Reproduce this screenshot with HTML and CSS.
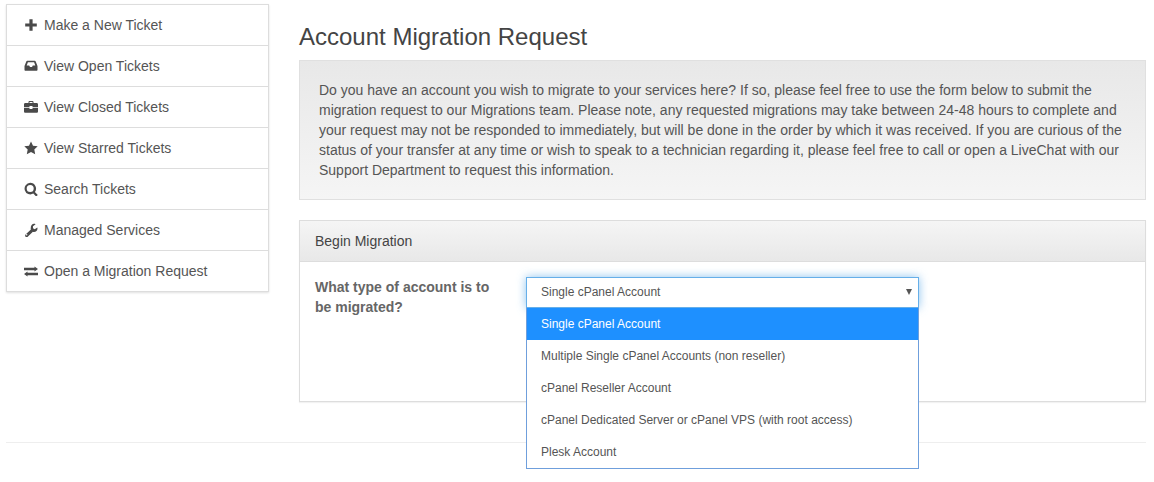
FILE: index.html
```html
<!DOCTYPE html>
<html lang="en">
<head>
<meta charset="utf-8">
<title>Account Migration Request</title>
<link rel="stylesheet" href="styles.css">
</head>
<body>
<div class="page">
  <div class="columns">
    <nav class="sidebar">
      <a class="nav-item"><svg class="icon" viewBox="0 0 14 14"><path d="M5.400 1.200h3.200v4.200h4.200v3.200H8.600v4.200H5.400V8.600H1.200V5.400h4.200z"/></svg>Make a New Ticket</a>
      <a class="nav-item"><svg class="icon" viewBox="0 0 14 14"><path fill-rule="evenodd" d="M3.200 1.800h7.600c.4 0 .7.2.9.6l1.700 4.300c.1.2.1.4.1.6v3.400c0 .6-.4 1-1 1H1.500c-.6 0-1-.4-1-1V7.300c0-.2 0-.4.1-.6l1.700-4.300c.2-.4.5-.6.9-.6zM3.900 3.300 2.700 6.600h2.500l.8 1.500h2l.8-1.500h2.500l-1.200-3.300z"/></svg>View Open Tickets</a>
      <a class="nav-item"><svg class="icon" viewBox="0 0 14 14"><path fill-rule="evenodd" d="M4.500 3V2c0-.5.4-.9.9-.9h3.200c.5 0 .9.4.9.9v1h3.200c.7 0 1.300.6 1.300 1.300v2.700H8.500V6h-3v1H0V4.300C0 3.600.6 3 1.300 3zm1-.9V3h3v-.9zM0 7.800h5.500v1.200h3V7.800H14v3.700c0 .7-.6 1.300-1.300 1.300H1.300C.6 12.800 0 12.200 0 11.500z"/></svg>View Closed Tickets</a>
      <a class="nav-item"><svg class="icon" viewBox="0 0 14 14"><path d="M7 .4l2 4.300 4.700.6-3.400 3.300.9 4.700L7 11l-4.200 2.300.9-4.700L.3 5.300 5 4.700z"/></svg>View Starred Tickets</a>
      <a class="nav-item"><svg class="icon" viewBox="0 0 14 14"><path fill-rule="evenodd" d="M6.200.8a5.800 5.800 0 0 1 4.700 9.200l2.900 2.900-1.600 1.600-2.900-2.900A5.800 5.800 0 1 1 6.200.8zm0 2.300a3.500 3.500 0 1 0 0 7 3.500 3.500 0 0 0 0-7z"/></svg>Search Tickets</a>
      <a class="nav-item"><svg class="icon" viewBox="0 0 14 14"><path fill-rule="evenodd" d="M10 .8c.6 0 1.100.1 1.600.4L9 3.200v2l1.700 1 2.600-1.800c.1.3.2.7.2 1 0 2-1.600 3.500-3.500 3.500-.4 0-.8-.1-1.100-.2l-5.200 5c-.6.600-1.500.6-2.100 0-.6-.6-.6-1.500 0-2.100l5.300-5.100c-.1-.3-.2-.7-.2-1.100C6.700 2.400 8.200.8 10 .8zM2.700 11a.7.7 0 1 0 0 1.400.7.7 0 0 0 0-1.400z"/></svg>Managed Services</a>
      <a class="nav-item"><svg class="icon" viewBox="0 0 14 14"><path d="M0 3.800h10.500V2.400L14 5l-3.500 2.600V6.200H0zM14 8.800v2.400H3.500v1.400L0 10l3.500-2.600v1.400z"/></svg>Open a Migration Request</a>
    </nav>
    <main class="content">
      <h1 class="title">Account Migration Request</h1>
      <div class="well">Do you have an account you wish to migrate to your services here? If so, please feel free to use the form below to submit the migration request to our Migrations team. Please note, any requested migrations may take between 24-48 hours to complete and your request may not be responded to immediately, but will be done in the order by which it was received. If you are curious of the status of your transfer at any time or wish to speak to a technician regarding it, please feel free to call or open a LiveChat with our Support Department to request this information.</div>
      <section class="panel">
        <div class="panel-head">Begin Migration</div>
        <div class="panel-body">
          <div class="field-label">What type of account is to be migrated?</div>
          <div class="field">
            <div class="select">Single cPanel Account<span class="arrow"></span></div>
            <ul class="options">
              <li class="option selected">Single cPanel Account</li>
              <li class="option">Multiple Single cPanel Accounts (non reseller)</li>
              <li class="option">cPanel Reseller Account</li>
              <li class="option">cPanel Dedicated Server or cPanel VPS (with root access)</li>
              <li class="option">Plesk Account</li>
            </ul>
          </div>
        </div>
      </section>
    </main>
  </div>
  <hr class="rule">
</div>
</body>
</html>
```

FILE: styles.css
```css
* { box-sizing: border-box; }
html, body { margin: 0; padding: 0; background: #fff; }
body {
  font-family: "Liberation Sans", Arial, sans-serif;
  font-size: 14px;
  line-height: 20px;
  color: #555;
}
.page { min-height: 482px; padding: 4px 8px 0 6px; }
.columns { display: flex; gap: 30px; align-items: flex-start; }
.sidebar {
  width: 263px;
  flex: none;
  border: 1px solid #ddd;
  border-bottom-width: 0;
  background: #fff;
  box-shadow: 0 1px 2px rgba(0, 0, 0, .12);
}
.nav-item {
  display: flex;
  align-items: center;
  gap: 6px;
  height: 41px;
  padding-left: 17px;
  border-bottom: 1px solid #ddd;
  color: #555;
}
.icon { width: 14px; height: 14px; fill: #4a4a4a; flex: none; }
.content { flex: 1; min-width: 0; }
.title {
  margin: 20px 0 10px;
  font-size: 24px;
  font-weight: 400;
  line-height: 26px;
  color: #444;
}
.well {
  height: 140px;
  padding: 19px;
  border: 1px solid #e0e0e0;
  background: linear-gradient(to bottom, #e8e8e8, #f5f5f5);
}
.panel {
  margin-top: 20px;
  border: 1px solid #ddd;
  box-shadow: 0 1px 1px rgba(0, 0, 0, .05);
}
.panel-head {
  height: 41px;
  padding: 10px 15px;
  border-bottom: 1px solid #ddd;
  background: linear-gradient(to bottom, #f5f5f5, #e8e8e8);
  color: #444;
}
.panel-body {
  display: flex;
  height: 139px;
  padding: 15px 226px 0 15px;
}
.field-label {
  width: 211px;
  flex: none;
  padding-right: 30px;
  font-weight: 700;
  color: #666;
}
.field { position: relative; flex: 1; }
.select {
  display: flex;
  align-items: center;
  height: 31px;
  padding: 0 0 2px 14px;
  border: 1px solid #66afe9;
  background: #fff;
  font-size: 12px;
  box-shadow: 0 0 10px rgba(102, 175, 233, .75);
}
.arrow {
  margin-left: auto;
  margin-right: 6px;
  border-left: 3px solid transparent;
  border-right: 3px solid transparent;
  border-top: 6px solid #555;
}
.options {
  position: absolute;
  top: 30px;
  left: 0;
  right: 0;
  margin: 0;
  padding: 0;
  list-style: none;
  background: #fff;
  border: 1px solid #6f9fdc;
  border-top-color: #66afe9;
  font-size: 12px;
}
.option { height: 32px; padding-left: 14px; line-height: 32px; }
.option.selected { background: #1e90ff; color: #fff; }
.rule {
  height: 1px;
  margin: 40px 0 0;
  border: 0;
  background: #eee;
}
```
